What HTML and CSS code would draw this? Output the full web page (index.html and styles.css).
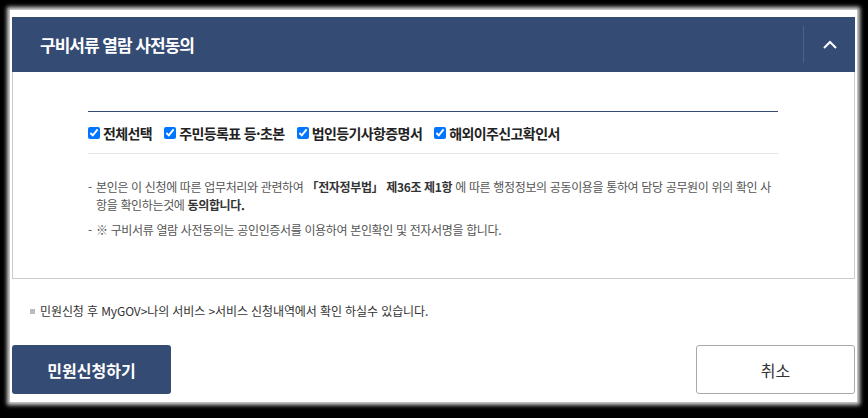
FILE: index.html
```html
<!DOCTYPE html>
<html lang="ko">
<head>
    <meta charset="UTF-8">
    <meta name="viewport" content="width=device-width, initial-scale=1.0">
    <title>구비서류 열람 사전동의</title>
    <link rel="stylesheet" href="styles.css">
</head>
<body>
    <div class="page">
        <div class="panel">
            <div class="panel-head">
                <h2>구비서류 열람 사전동의</h2>
                <button type="button" class="toggle" aria-label="접기">
                    <svg width="16" height="10" viewBox="0 0 16 10">
                        <path d="M2 8 L8 2 L14 8" fill="none" stroke="#fff" stroke-width="2"/>
                    </svg>
                </button>
            </div>
            <div class="panel-body">
                <div class="check-row">
                    <label><input type="checkbox" checked> 전체선택</label>
                    <label><input type="checkbox" checked> 주민등록표 등·초본</label>
                    <label><input type="checkbox" checked> 법인등기사항증명서</label>
                    <label><input type="checkbox" checked> 해외이주신고확인서</label>
                </div>
                <ul class="notes">
                    <li>본인은 이 신청에 따른 업무처리와 관련하여 <b>「전자정부법」 제36조 제1항</b> 에 따른 행정정보의 공동이용을 통하여 담당 공무원이 위의 확인 사항을 확인하는것에 <b>동의합니다.</b></li>
                    <li>※ 구비서류 열람 사전동의는 공인인증서를 이용하여 본인확인 및 전자서명을 합니다.</li>
                </ul>
            </div>
        </div>

        <p class="info">민원신청 후 MyGOV&gt;나의 서비스 &gt;서비스 신청내역에서 확인 하실수 있습니다.</p>

        <div class="actions">
            <button type="button" class="btn btn-primary">민원신청하기</button>
            <button type="button" class="btn btn-cancel">취소</button>
        </div>
    </div>
</body>
</html>
```

FILE: styles.css
```css
html, body {
    height: 100%;
}
body {
    margin: 0;
    background-color: #000;
    font-family: "Noto Sans CJK KR", "Noto Sans", sans-serif;
    color: #333;
}
.page {
    margin: 10px 11px 0 10px;
    height: 392px;
    padding: 7px 2px 0 2px;
    background-color: #fff;
    box-shadow: 0 0 4px 3px #d8d8d8;
    box-sizing: border-box;
}
.panel-head {
    display: flex;
    align-items: center;
    justify-content: space-between;
    height: 55px;
    background-color: #344b74;
}
.panel-head h2 {
    margin: 0 0 0 28px;
    font-size: 17px;
    font-weight: bold;
    color: #fff;
    letter-spacing: -1px;
}
.toggle {
    width: 52px;
    height: 37px;
    border: none;
    border-left: 1px solid #4d6189;
    background: none;
    padding: 0;
    display: flex;
    align-items: center;
    justify-content: center;
    cursor: pointer;
}
.panel-body {
    border: 1px solid #ccc;
    border-top: none;
    padding: 39px 76px 32px 75px;
}
.check-row {
    display: flex;
    align-items: center;
    gap: 12px;
    height: 41px;
    border-top: 1px solid #344b74;
    border-bottom: 1px solid #e5e5e5;
}
.check-row label {
    display: flex;
    align-items: center;
    font-size: 14px;
    font-weight: bold;
    color: #222;
    letter-spacing: -0.6px;
}
.check-row input {
    margin: 0 3px 0 0;
    width: 12px;
    height: 12px;
}
.notes {
    list-style: none;
    margin: 24px 0 0 0;
    padding: 0;
    font-size: 12px;
    color: #555;
    line-height: 18px;
    letter-spacing: -0.35px;
}
.notes li {
    position: relative;
    padding-left: 8px;
    margin-bottom: 7px;
}
.notes li::before {
    content: "-";
    position: absolute;
    left: 0;
    top: 0;
}
.notes b {
    color: #333;
}
.info {
    position: relative;
    margin: 23px 0 0 28px;
    font-size: 12px;
    color: #333;
    letter-spacing: -0.1px;
}
.info::before {
    content: "";
    position: absolute;
    left: -10px;
    top: 7px;
    width: 5px;
    height: 5px;
    background-color: #bbb;
}
.actions {
    display: flex;
    justify-content: space-between;
    margin-top: 26px;
}
.btn {
    width: 159px;
    height: 49px;
    border-radius: 3px;
    font-family: inherit;
    font-size: 16px;
    cursor: pointer;
}
.btn-primary {
    background-color: #344b74;
    border: none;
    color: #fff;
    font-weight: bold;
}
.btn-cancel {
    background-color: #fff;
    border: 1px solid #aaa;
    color: #333;
}
```
